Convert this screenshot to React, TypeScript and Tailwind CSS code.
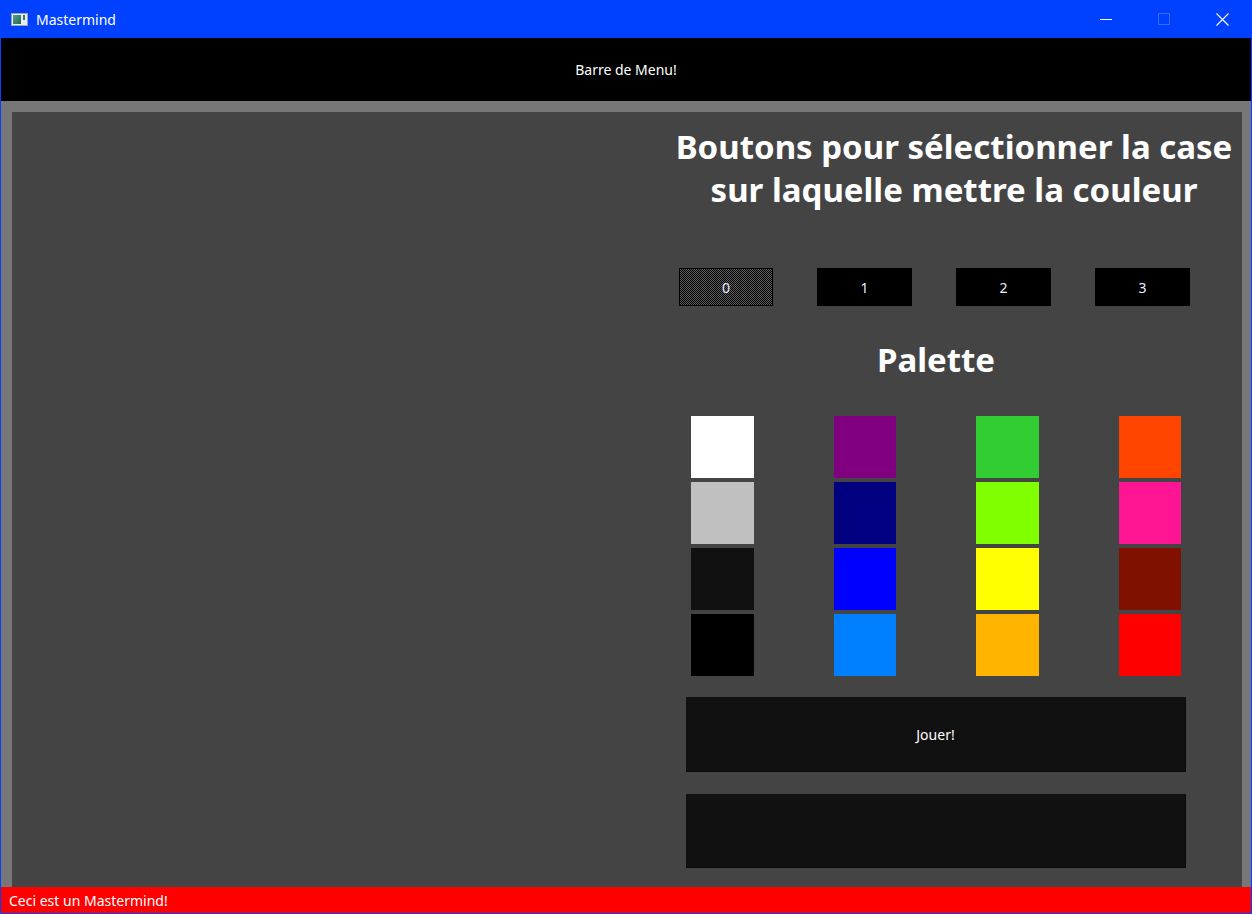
const palette = [
  ["#ffffff", "#c0c0c0", "#111111", "#000000"],
  ["#800080", "#000080", "#0000ff", "#0080ff"],
  ["#32cd32", "#7fff00", "#ffff00", "#ffb400"],
  ["#ff4500", "#ff1493", "#801000", "#ff0000"],
]

function AppIcon() {
  return (
    <svg width="17" height="13" viewBox="0 0 17 13">
      <rect x="0.5" y="0.5" width="16" height="12" fill="#e8ecf0" stroke="#9aa4b0" />
      <defs>
        <linearGradient id="g" x1="0" y1="0" x2="1" y2="1">
          <stop offset="0" stopColor="#5aa08a" />
          <stop offset="1" stopColor="#1e6b58" />
        </linearGradient>
      </defs>
      <rect x="2" y="2" width="8" height="9" fill="url(#g)" />
      <rect x="12" y="2" width="2" height="5" fill="#3a7a6a" />
    </svg>
  )
}

export default function App() {
  return (
    <div
      className="w-[1252px] h-[914px] flex flex-col border-x border-b border-[#0041ff] overflow-hidden text-white"
      style={{ fontFamily: '"Noto Sans", "Open Sans", sans-serif' }}
    >
      {/* title bar */}
      <div className="h-[38px] shrink-0 bg-[#0041ff] flex items-center">
        <div className="pl-[10px] pr-[8px] flex items-center">
          <AppIcon />
        </div>
        <span className="text-[14px] text-white">Mastermind</span>
        <div className="ml-auto flex items-center h-full">
          <div className="w-[58px] h-full flex items-center justify-center">
            <div className="w-[12px] h-px bg-white" />
          </div>
          <div className="w-[58px] h-full flex items-center justify-center">
            <div className="w-[12px] h-[12px] border border-[#3a6cff]" />
          </div>
          <div className="w-[58px] h-full flex items-center justify-center">
            <svg width="13" height="13" viewBox="0 0 13 13">
              <path d="M0.5 0.5 L12.5 12.5 M12.5 0.5 L0.5 12.5" stroke="#fff" strokeWidth="1.1" />
            </svg>
          </div>
        </div>
      </div>

      {/* menu bar */}
      <div className="h-[63px] shrink-0 bg-black flex items-center justify-center">
        <span className="text-[14px]">Barre de Menu!</span>
      </div>

      {/* main area */}
      <div className="flex-1 min-h-0 bg-[#777777] pt-[11px] pl-[11px] pr-[9px] flex">
        <div className="flex-1 bg-[#444444] flex justify-end pr-[37px]">
          <div className="w-[538px] flex flex-col items-center">
            <div className="w-[574px] -mr-[36px] pt-[13px] text-center text-[33px] font-bold leading-[43px]">
              Boutons pour sélectionner la case
              <br />
              sur laquelle mettre la couleur
            </div>

            <div className="mt-[57px] w-full pl-[12px] flex gap-[44px]">
              {["0", "1", "2", "3"].map((n, i) => (
                <button
                  key={n}
                  className={
                    i === 0
                      ? "w-[94px] h-[38px] border border-black text-[14px] text-[#e6f2ff] bg-[repeating-conic-gradient(#000000_0%_25%,#5c5c5c_0%_50%)] bg-[length:2px_2px]"
                      : "w-[95px] h-[38px] bg-black text-[14px] text-[#e6f2ff]"
                  }
                >
                  {n}
                </button>
              ))}
            </div>

            <div className="mt-[32px] text-[33px] font-bold leading-[43px]">Palette</div>

            <div className="mt-[35px] w-full pl-[24px] flex gap-[80px]">
              {palette.map((col, ci) => (
                <div key={ci} className={ci % 2 === 0 ? "w-[63px] flex flex-col gap-[4px]" : "w-[62px] flex flex-col gap-[4px]"}>
                  {col.map((c) => (
                    <div key={c} className="w-full h-[62px]" style={{ backgroundColor: c }} />
                  ))}
                </div>
              ))}
            </div>

            <button className="mt-[21px] w-[500px] h-[75px] bg-[#111111] border-r border-b border-[#0a0a0a] text-[14px]">
              Jouer!
            </button>
            <div className="mt-[22px] w-[500px] h-[74px] bg-[#111111] border-r border-b border-[#0a0a0a]" />
          </div>
        </div>
      </div>

      {/* status bar */}
      <div className="h-[26px] shrink-0 bg-[#ff0000] flex items-center pl-[8px]">
        <span className="text-[14px]">Ceci est un Mastermind!</span>
      </div>
    </div>
  )
}
